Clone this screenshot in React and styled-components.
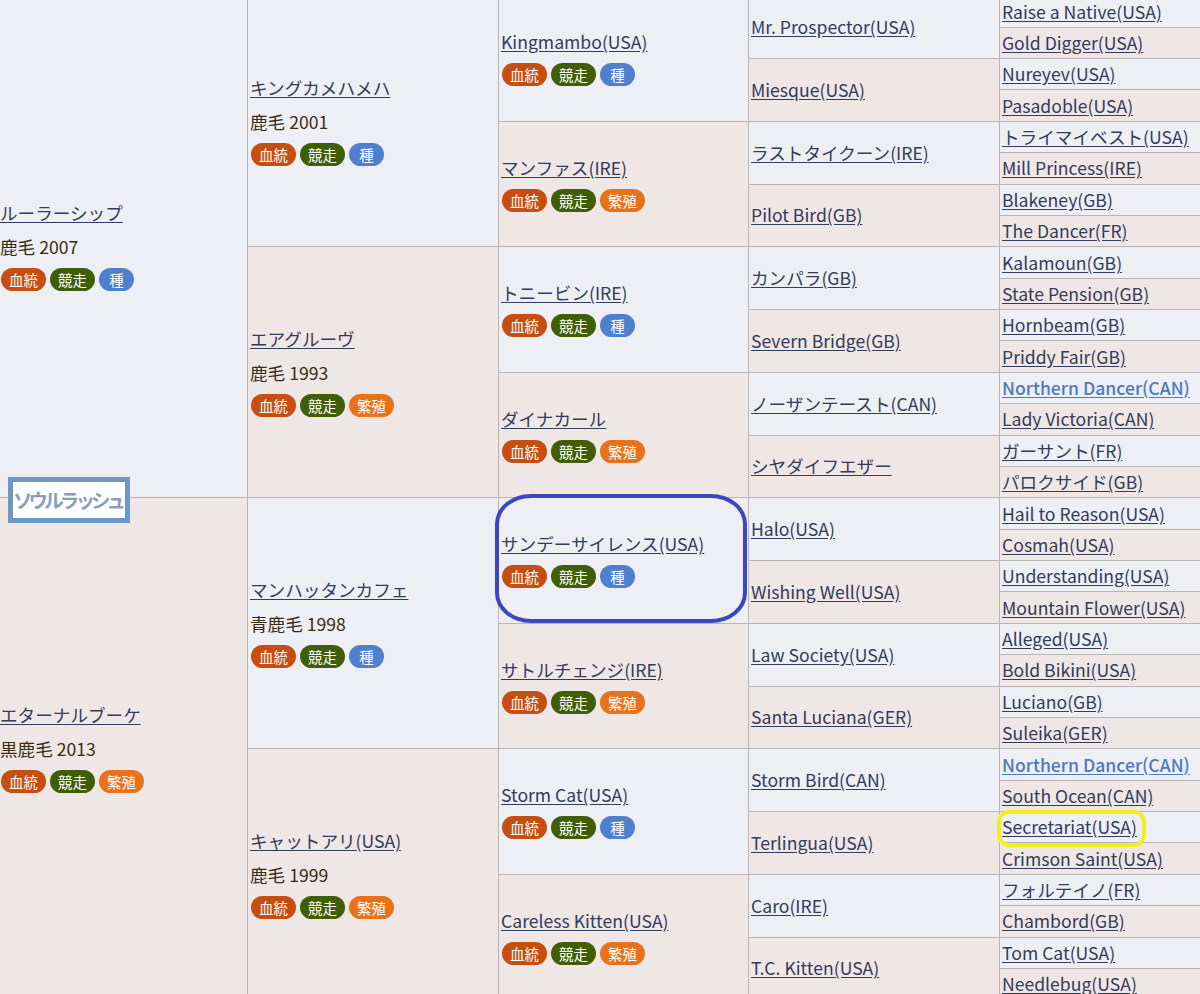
import styled, { createGlobalStyle } from "styled-components";

const ROW = 31.375;

const sires = [
  { name: "ルーラーシップ", sub: "鹿毛 2007", tag: "種" },
  { name: "エターナルブーケ", sub: "黒鹿毛 2013", tag: "繁殖" },
];
const gen2 = [
  { name: "キングカメハメハ", sub: "鹿毛 2001", tag: "種" },
  { name: "エアグルーヴ", sub: "鹿毛 1993", tag: "繁殖" },
  { name: "マンハッタンカフェ", sub: "青鹿毛 1998", tag: "種" },
  { name: "キャットアリ(USA)", sub: "鹿毛 1999", tag: "繁殖" },
];
const gen3 = [
  { name: "Kingmambo(USA)", tag: "種" },
  { name: "マンファス(IRE)", tag: "繁殖" },
  { name: "トニービン(IRE)", tag: "種" },
  { name: "ダイナカール", tag: "繁殖" },
  { name: "サンデーサイレンス(USA)", tag: "種" },
  { name: "サトルチェンジ(IRE)", tag: "繁殖" },
  { name: "Storm Cat(USA)", tag: "種" },
  { name: "Careless Kitten(USA)", tag: "繁殖" },
];
const gen4 = [
  "Mr. Prospector(USA)", "Miesque(USA)", "ラストタイクーン(IRE)", "Pilot Bird(GB)",
  "カンパラ(GB)", "Severn Bridge(GB)", "ノーザンテースト(CAN)", "シヤダイフエザー",
  "Halo(USA)", "Wishing Well(USA)", "Law Society(USA)", "Santa Luciana(GER)",
  "Storm Bird(CAN)", "Terlingua(USA)", "Caro(IRE)", "T.C. Kitten(USA)",
].map((name) => ({ name }));
const gen5 = [
  "Raise a Native(USA)", "Gold Digger(USA)", "Nureyev(USA)", "Pasadoble(USA)",
  "トライマイベスト(USA)", "Mill Princess(IRE)", "Blakeney(GB)", "The Dancer(FR)",
  "Kalamoun(GB)", "State Pension(GB)", "Hornbeam(GB)", "Priddy Fair(GB)",
  "Northern Dancer(CAN)", "Lady Victoria(CAN)", "ガーサント(FR)", "パロクサイド(GB)",
  "Hail to Reason(USA)", "Cosmah(USA)", "Understanding(USA)", "Mountain Flower(USA)",
  "Alleged(USA)", "Bold Bikini(USA)", "Luciano(GB)", "Suleika(GER)",
  "Northern Dancer(CAN)", "South Ocean(CAN)", "Secretariat(USA)", "Crimson Saint(USA)",
  "フォルテイノ(FR)", "Chambord(GB)", "Tom Cat(USA)", "Needlebug(USA)",
].map((name) => ({ name, strong: name.startsWith("Northern") }));

const generations = [sires, gen2, gen3, gen4, gen5];

const tagColors = { 血統: "#c54e10", 競走: "#3f5e06", 種: "#4f80cf", 繁殖: "#e8721a" };

const GlobalStyle = createGlobalStyle`
  html, body {
    margin: 0;
    padding: 0;
    height: 994px;
    overflow: hidden;
    background: #fff;
  }
  body {
    font-family: "Noto Sans CJK JP", "Noto Sans", sans-serif;
    font-size: 17.6px;
  }
`;

const Page = styled.div`
  position: relative;
  width: 1200px;
  height: 994px;
  overflow: hidden;
`;

const Pedigree = styled.div`
  display: grid;
  grid-template-columns: 248px 251px 250px 251px 200px;
  grid-template-rows: repeat(32, ${ROW}px);
  margin-top: -3.7px;
`;

const Cell = styled.div`
  grid-column: ${(p) => p.$col};
  grid-row: ${(p) => p.$row} / span ${(p) => p.$span};
  display: flex;
  flex-direction: column;
  justify-content: center;
  align-items: flex-start;
  gap: 8px;
  box-sizing: border-box;
  padding-left: ${(p) => (p.$col === 1 ? 0 : 2)}px;
  background: ${(p) => (p.$dam ? "#efe6e6" : "#eeeef5")};
  border-bottom: 1px solid #bab5b5;
  border-right: ${(p) => (p.$col === 5 ? "none" : "1px solid #bab5b5")};
  overflow: hidden;
`;

const HorseLink = styled.a`
  color: ${(p) => (p.$strong ? "#4d7abd" : "#333c58")};
  font-weight: ${(p) => (p.$strong ? 500 : 400)};
  line-height: 26px;
  text-decoration: underline;
  text-underline-offset: 2px;
  white-space: nowrap;
`;

const Detail = styled.div`
  color: #3a2c10;
  line-height: 26px;
`;

const Tags = styled.div`
  display: flex;
  gap: 4px;
  margin: 0 0 2px 1px;
`;

const Tag = styled.span`
  display: inline-flex;
  align-items: center;
  justify-content: center;
  box-sizing: border-box;
  min-width: 35px;
  height: 23px;
  padding: 0 8.1px;
  border-radius: 12px;
  background: ${(p) => p.$color};
  color: #fff;
  font-size: 14.4px;
  line-height: 23px;
`;

const HorseLabel = styled.div`
  position: absolute;
  left: 8px;
  top: 477px;
  box-sizing: border-box;
  width: 122px;
  height: 46px;
  border: 5px solid #7096c4;
  background: #fff;
  color: #8a9fbf;
  font-size: 19.5px;
  font-weight: 700;
  letter-spacing: -3.9px;
  line-height: 35px;
  white-space: nowrap;
`;

const Marker = styled.div`
  position: absolute;
  box-sizing: border-box;
  left: ${(p) => p.$left}px;
  top: ${(p) => p.$top}px;
  width: ${(p) => p.$width}px;
  height: ${(p) => p.$height}px;
  border: ${(p) => p.$stroke}px solid ${(p) => p.$color};
  border-radius: ${(p) => p.$radius};
`;

const App = () => {
  return (
    <Page>
      <GlobalStyle />
      <Pedigree>
        {generations.map((horses, g) => {
          const span = 32 / horses.length;
          return horses.map((horse, i) => (
            <Cell key={`${g}-${i}`} $col={g + 1} $row={i * span + 1} $span={span} $dam={i % 2 === 1}>
              <HorseLink href="#" $strong={horse.strong}>{horse.name}</HorseLink>
              {horse.sub && <Detail>{horse.sub}</Detail>}
              {horse.tag && (
                <Tags>
                  {["血統", "競走", horse.tag].map((t) => (
                    <Tag key={t} $color={tagColors[t]}>{t}</Tag>
                  ))}
                </Tags>
              )}
            </Cell>
          ));
        })}
      </Pedigree>
      <HorseLabel>ソウルラッシュ</HorseLabel>
      <Marker $left={495} $top={494} $width={252} $height={129} $stroke={4.5} $color="#3c46be" $radius="36px / 30px" />
      <Marker $left={997} $top={810} $width={149} $height={37} $stroke={4} $color="#f5ee1e" $radius="12px" />
    </Page>
  );
};

export default App;
